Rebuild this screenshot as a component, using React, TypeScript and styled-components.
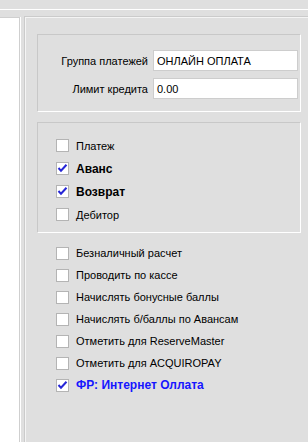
import React from 'react'
import styled, { createGlobalStyle } from 'styled-components'

const GlobalStyle = createGlobalStyle`
    html, body {
        margin: 0;
        padding: 0;
        background: #dfdfdf;
        overflow: hidden;
    }
    body {
        font-family: "Liberation Sans", Arial, sans-serif;
        font-size: 11px;
        color: #000;
    }
`

const Screen = styled.div`
    width: 308px;
    height: 442px;
    overflow: hidden;
    background: #dfdfdf;
`

const TopStrip = styled.div`
    height: 9px;
    border-bottom: 1px solid #ffffff;
`

const Body = styled.div`
    display: flex;
    gap: 4px;
    padding-top: 6px;
    height: 426px;
`

const SidePane = styled.div`
    width: 19px;
    margin-top: 1px;
    background: #ffffff;
    border-top: 1px solid #cfcfcf;
    border-right: 1px solid #cfcfcf;
    box-shadow: 1px 0 0 #ffffff;
`

const Panel = styled.div`
    flex: 1;
    border-top: 1px solid #cbcbcb;
    border-left: 1px solid #cbcbcb;
    box-shadow: inset 1px 1px 0 #f4f4f4;
    padding: 17px 7px 0 12px;
`

const GroupBox = styled.div<{ $gap?: number }>`
    border-top: 1px solid #c8c8c8;
    border-left: 1px solid #c8c8c8;
    border-right: 1px solid #ffffff;
    border-bottom: 1px solid #ffffff;
    margin-bottom: ${p => p.$gap ?? 0}px;
`

const FieldGrid = styled.div`
    display: grid;
    grid-template-columns: 1fr 145px;
    column-gap: 5px;
    row-gap: 7px;
    padding: 15px 2px 12px 0;
    align-items: center;
`

const FieldLabel = styled.div`
    text-align: right;
    white-space: nowrap;
`

const TextField = styled.div`
    height: 21px;
    box-sizing: border-box;
    background: #ffffff;
    border: 1px solid #cdcdcd;
    padding-left: 3px;
    display: flex;
    align-items: center;
`

const CheckList = styled.div<{ $rowH: number; $top: number; $bottom: number; $left: number }>`
    display: flex;
    flex-direction: column;
    padding: ${p => p.$top}px 0 ${p => p.$bottom}px ${p => p.$left}px;

    & > * {
        height: ${p => p.$rowH}px;
    }
`

const Row = styled.label`
    display: flex;
    align-items: center;
    gap: 7px;
    white-space: nowrap;
`

const Box = styled.span`
    width: 13px;
    height: 13px;
    box-sizing: border-box;
    background: #ffffff;
    border: 1px solid #b4b4b4;
    display: inline-flex;
    align-items: center;
    justify-content: center;
    flex: none;
`

const Caption = styled.span<{ $bold?: boolean; $blue?: boolean }>`
    font-weight: ${p => (p.$bold ? 700 : 400)};
    font-size: ${p => (p.$bold ? 12 : 11)}px;
    color: ${p => (p.$blue ? '#1616ff' : '#000')};
`

const Tick = () => (
    <svg width="11" height="11" viewBox="0 0 11 11">
        <polyline points="1.5,5 4,7.8 9.5,1.8" fill="none" stroke="#2626d6" strokeWidth="2" />
    </svg>
)

interface CheckProps {
    label: string
    checked?: boolean
    bold?: boolean
    blue?: boolean
}

const Check: React.FC<CheckProps> = ({ label, checked, bold, blue }) => (
    <Row>
        <Box>{checked && <Tick />}</Box>
        <Caption $bold={bold} $blue={blue}>{label}</Caption>
    </Row>
)

const App: React.FC = () => {
    return (
        <Screen>
            <GlobalStyle />
            <TopStrip />
            <Body>
                <SidePane />
                <Panel>
                    <GroupBox $gap={10}>
                        <FieldGrid>
                            <FieldLabel>Группа платежей</FieldLabel>
                            <TextField>ОНЛАЙН ОПЛАТА</TextField>
                            <FieldLabel>Лимит кредита</FieldLabel>
                            <TextField>0.00</TextField>
                        </FieldGrid>
                    </GroupBox>
                    <GroupBox>
                        <CheckList $rowH={23} $top={11} $bottom={6} $left={18}>
                            <Check label="Платеж" />
                            <Check label="Аванс" checked bold />
                            <Check label="Возврат" checked bold />
                            <Check label="Дебитор" />
                        </CheckList>
                    </GroupBox>
                    <CheckList $rowH={22} $top={9} $bottom={0} $left={19}>
                        <Check label="Безналичный расчет" />
                        <Check label="Проводить по кассе" />
                        <Check label="Начислять бонусные баллы" />
                        <Check label="Начислять б/баллы по Авансам" />
                        <Check label="Отметить для ReserveMaster" />
                        <Check label="Отметить для ACQUIROPAY" />
                        <Check label="ФР: Интернет Оллата" checked bold blue />
                    </CheckList>
                </Panel>
            </Body>
        </Screen>
    )
}

export default App
